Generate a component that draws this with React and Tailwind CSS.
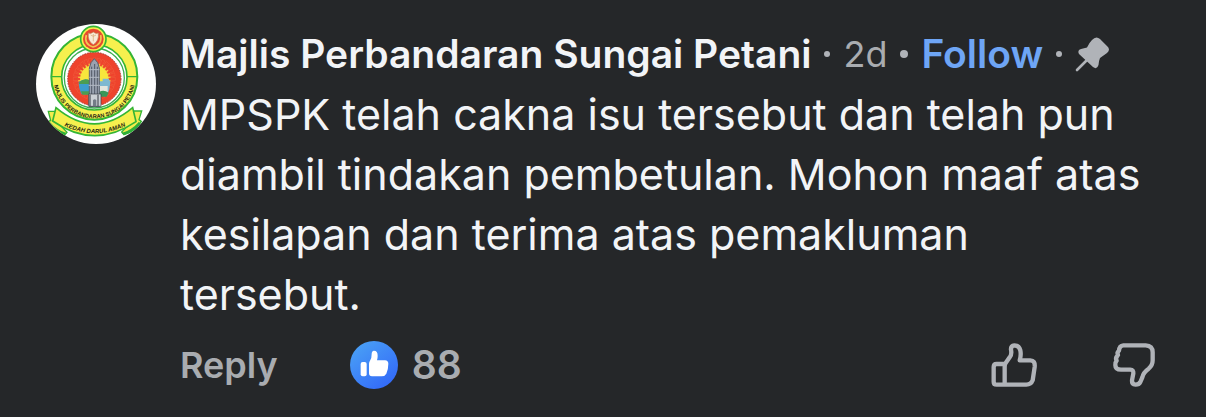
const TEETH = Array.from({ length: 28 }, (_, i) => (i * 360) / 28);

const CouncilLogo = () => (
  <svg viewBox="30 30 360 360" className="size-30 shrink-0 rounded-full bg-white" role="img" aria-label="Majlis Perbandaran Sungai Petani">
    <defs>
      <path id="ringText" d="M 82 190 A 123 123 0 0 0 328 190" />
      <path id="ribbonText" d="M 98 327 Q 206 388 316 327" />
    </defs>

    {/* Yellow ring */}
    <circle cx="205" cy="188" r="129" fill="#f6f04e" stroke="#35b535" strokeWidth="6" />
    <path d="M 75 188 H 108 M 302 188 H 335" stroke="#35b535" strokeWidth="4" />
    <circle cx="205" cy="190" r="98" fill="#fff" stroke="#35b535" strokeWidth="5" />
    <circle cx="205" cy="192" r="90" fill="#fff" stroke="#3cae50" strokeWidth="4" />

    {/* Red gear with the clock tower */}
    <circle cx="205" cy="195" r="80" fill="#ee432c" stroke="#a8433a" strokeWidth="3" strokeDasharray="5 3" />
    <circle cx="205" cy="195" r="49" fill="#f7e63c" />
    {TEETH.map((angle) => (
      <path key={angle} d="M 200 132 h 10 l -2 20 h -6 z" fill="#ee432c" stroke="#f0714c" strokeWidth="1" transform={`rotate(${angle} 205 195)`} />
    ))}
    <path d="M 158 204 q 14 -12 34 -5 v 42 h -25 q -8 -14 -9 -37 z" fill="#3c9dcc" />
    <path d="M 160 204 q 16 -14 32 -4 v 10 h -33 z M 165 232 h 28 v 10 h -24 z" fill="#4b9d50" />
    <path d="M 218 202 h 12 v -8 h 18 l 5 10 q -1 22 -9 38 h -26 z" fill="#7fb9d1" />
    <path d="M 221 216 h 24 v 20 h -24 z" fill="#e5e6de" />
    <path d="M 219 234 q 14 -9 29 2 l -6 12 h -23 z" fill="#3a9659" />
    <path d="M 190 278 V 162 L 195 146 L 205 134 L 215 146 L 220 162 V 278 Z" fill="#9aa2b0" stroke="#5d6370" strokeWidth="3" />
    <path d="M 197 158 V 240 M 206 150 V 240 M 214 158 V 240" stroke="#515966" strokeWidth="3" />
    <path d="M 190 167 h 30 M 190 190 h 30 M 188 214 h 34" stroke="#b3bac3" strokeWidth="3" />
    <path d="M 188 240 h 37 v 37 h -37 z" fill="#cbd0d5" stroke="#343943" strokeWidth="2" />
    <path d="M 192 242 v 34 M 216 242 v 34" stroke="#343943" strokeWidth="3" />
    <path d="M 201 277 v -18 q 5 -7 10 0 v 18 z" fill="#737b87" />

    {/* State crest */}
    <circle cx="202" cy="75" r="38" fill="#f6f04e" stroke="#35b535" strokeWidth="5" />
    <circle cx="202" cy="75" r="31" fill="#e74830" />
    <path d="M 181 63 q -8 27 20 36 q 29 -8 23 -36" fill="none" stroke="#f2c452" strokeWidth="5" />
    <path d="M 187 57 q 7 4 15 -3 q 8 7 15 3 q 3 24 -15 35 q -18 -10 -15 -35 z" fill="#f8ead6" stroke="#c18452" strokeWidth="2" />
    <path d="M 194 63 q 8 8 16 0 M 202 60 v 22" fill="none" stroke="#d4a66e" strokeWidth="2" />

    {/* Ribbon */}
    <path d="M 67 292 h 25 v 30 l 31 33 l -7 8 q -35 -12 -52 -38 l 10 -6 z" fill="#f2ec4c" stroke="#35b535" strokeWidth="4" />
    <path d="M 347 291 h -28 v 30 l -32 33 l 7 8 q 37 -12 52 -40 l -7 -5 z" fill="#f2ec4c" stroke="#35b535" strokeWidth="4" />
    <path d="M 90 281 Q 205 378 320 281 L 330 323 Q 205 408 80 321 Z" fill="#f6f04e" stroke="#35b535" strokeWidth="5" />
    <path d="M 71 323 q 22 26 51 34 l -8 6 q -29 -10 -48 -34 z M 339 323 q -23 26 -52 34 l 8 6 q 30 -10 48 -34 z" fill="#2fae38" />

    <text fontFamily="Liberation Sans" fontSize="17" fontWeight="700" fill="#262512">
      <textPath href="#ringText" startOffset="50%" textAnchor="middle">MAJLIS PERBANDARAN SUNGAI PETANI</textPath>
    </text>
    <text fontFamily="Liberation Sans" fontSize="18" fontWeight="700" fontStyle="italic" fill="#262512">
      <textPath href="#ribbonText" startOffset="50%" textAnchor="middle">KEDAH DARUL AMAN</textPath>
    </text>
  </svg>
);

const PinIcon = () => (
  <svg viewBox="0 0 36 36" className="size-9" aria-hidden="true">
    <path d="M 2 34 L 13 23" stroke="#b0b3b8" strokeWidth="2.6" strokeLinecap="round" />
    <path d="M 17 4 Q 21 -0.5 25 3 L 32 10 Q 36 13.500 32 17 L 25 22 Q 24 24 23.500 29 Q 22 34 18 31 L 4 18 Q 2 14 6 13 L 12 11.500 Q 14 7 17 4 Z" fill="#b0b3b8" />
  </svg>
);

const LikeBadge = () => (
  <svg viewBox="0 0 144 144" className="size-12" role="img" aria-label="Like">
    <defs>
      <linearGradient id="likeBlue" x1="0" y1="0" x2="0.8" y2="1">
        <stop offset="0" stopColor="#4ca6f5" />
        <stop offset="1" stopColor="#3268f8" />
      </linearGradient>
    </defs>
    <circle cx="72" cy="72" r="72" fill="url(#likeBlue)" />
    <rect x="32" y="63" width="18" height="43" rx="6" fill="#fff" />
    <path d="M 57 68 Q 57 63 61 57 Q 65 51 65 39 Q 65 30 72 29 Q 83 29 83 44 Q 83 51 81 58 H 105 Q 115 59 115 68 Q 115 84 109 98 Q 105 106 95 106 H 66 Q 57 106 57 97 Z" fill="#fff" />
  </svg>
);

const ThumbUpIcon = () => (
  <svg viewBox="0 0 138 132" className="h-11 w-12" fill="none" stroke="#b0b3b8" strokeWidth="13" strokeLinejoin="round" aria-hidden="true">
    <path d="M 41 63 H 17 Q 8 63 8 72 V 116 Q 8 125 17 125 H 106 Q 120 125 125 112 L 131 72 Q 133 52 118 52 H 86 Q 91 37 88 22 Q 84 7 70 7 Q 59 8 60 20 Q 63 35 56 43 L 44 60 Q 41 65 41 72 V 125" />
  </svg>
);

const ThumbDownIcon = () => (
  <svg viewBox="0 0 126 132" className="h-11 w-12" fill="none" stroke="#b0b3b8" strokeWidth="13" strokeLinejoin="round" aria-hidden="true">
    <path d="M 31 7 H 98 Q 119 8 119 28 V 52 Q 119 67 107 77 Q 91 88 88 103 L 82 117 Q 78 125 68 125 Q 56 124 57 112 L 61 91 Q 62 80 52 80 H 24 Q 7 80 7 66 Q 6 58 11 53 Q 6 45 15 36 Q 11 29 18 23 Q 19 8 31 7 Z" />
  </svg>
);

const App = () => {
  return (
    <main className="min-h-screen bg-[#252729] pt-6 pr-12 pb-6 pl-9 font-['Inter','Liberation_Sans',sans-serif] text-[#f2f4f7]">
      <article className="flex items-start gap-6">
        <CouncilLogo />

        <div className="min-w-0 flex-1">
          <header className="flex h-15 items-center gap-[13px] text-[39px] whitespace-nowrap">
            <h1 className="font-semibold">Majlis Perbandaran Sungai Petani</h1>
            <span className="size-1.5 rounded-full bg-[#b0b3b8]" />
            <time className="text-4xl text-[#a9acb0]">2d</time>
            <span className="size-2 rounded-full bg-[#b0b3b8]" />
            <a href="#follow" className="font-semibold text-[#6ea5f5]">Follow</a>
            <span className="size-1.5 rounded-full bg-[#b0b3b8]" />
            <PinIcon />
          </header>

          <p className="pr-2 text-[43px] leading-15">
            MPSPK telah cakna isu tersebut dan telah pun diambil tindakan pembetulan. Mohon maaf atas kesilapan dan terima atas pemakluman tersebut.
          </p>

          <footer className="mt-[17px] flex items-center text-4xl leading-12 font-semibold text-[#a9acb0]">
            <button type="button">Reply</button>
            <button type="button" className="ml-18 flex items-center gap-3.5">
              <LikeBadge />
              <span className="text-[39px]">88</span>
            </button>
            <div className="ml-auto flex items-center gap-18">
              <button type="button" aria-label="Like comment">
                <ThumbUpIcon />
              </button>
              <button type="button" aria-label="Dislike comment">
                <ThumbDownIcon />
              </button>
            </div>
          </footer>
        </div>
      </article>
    </main>
  );
};

export default App;
